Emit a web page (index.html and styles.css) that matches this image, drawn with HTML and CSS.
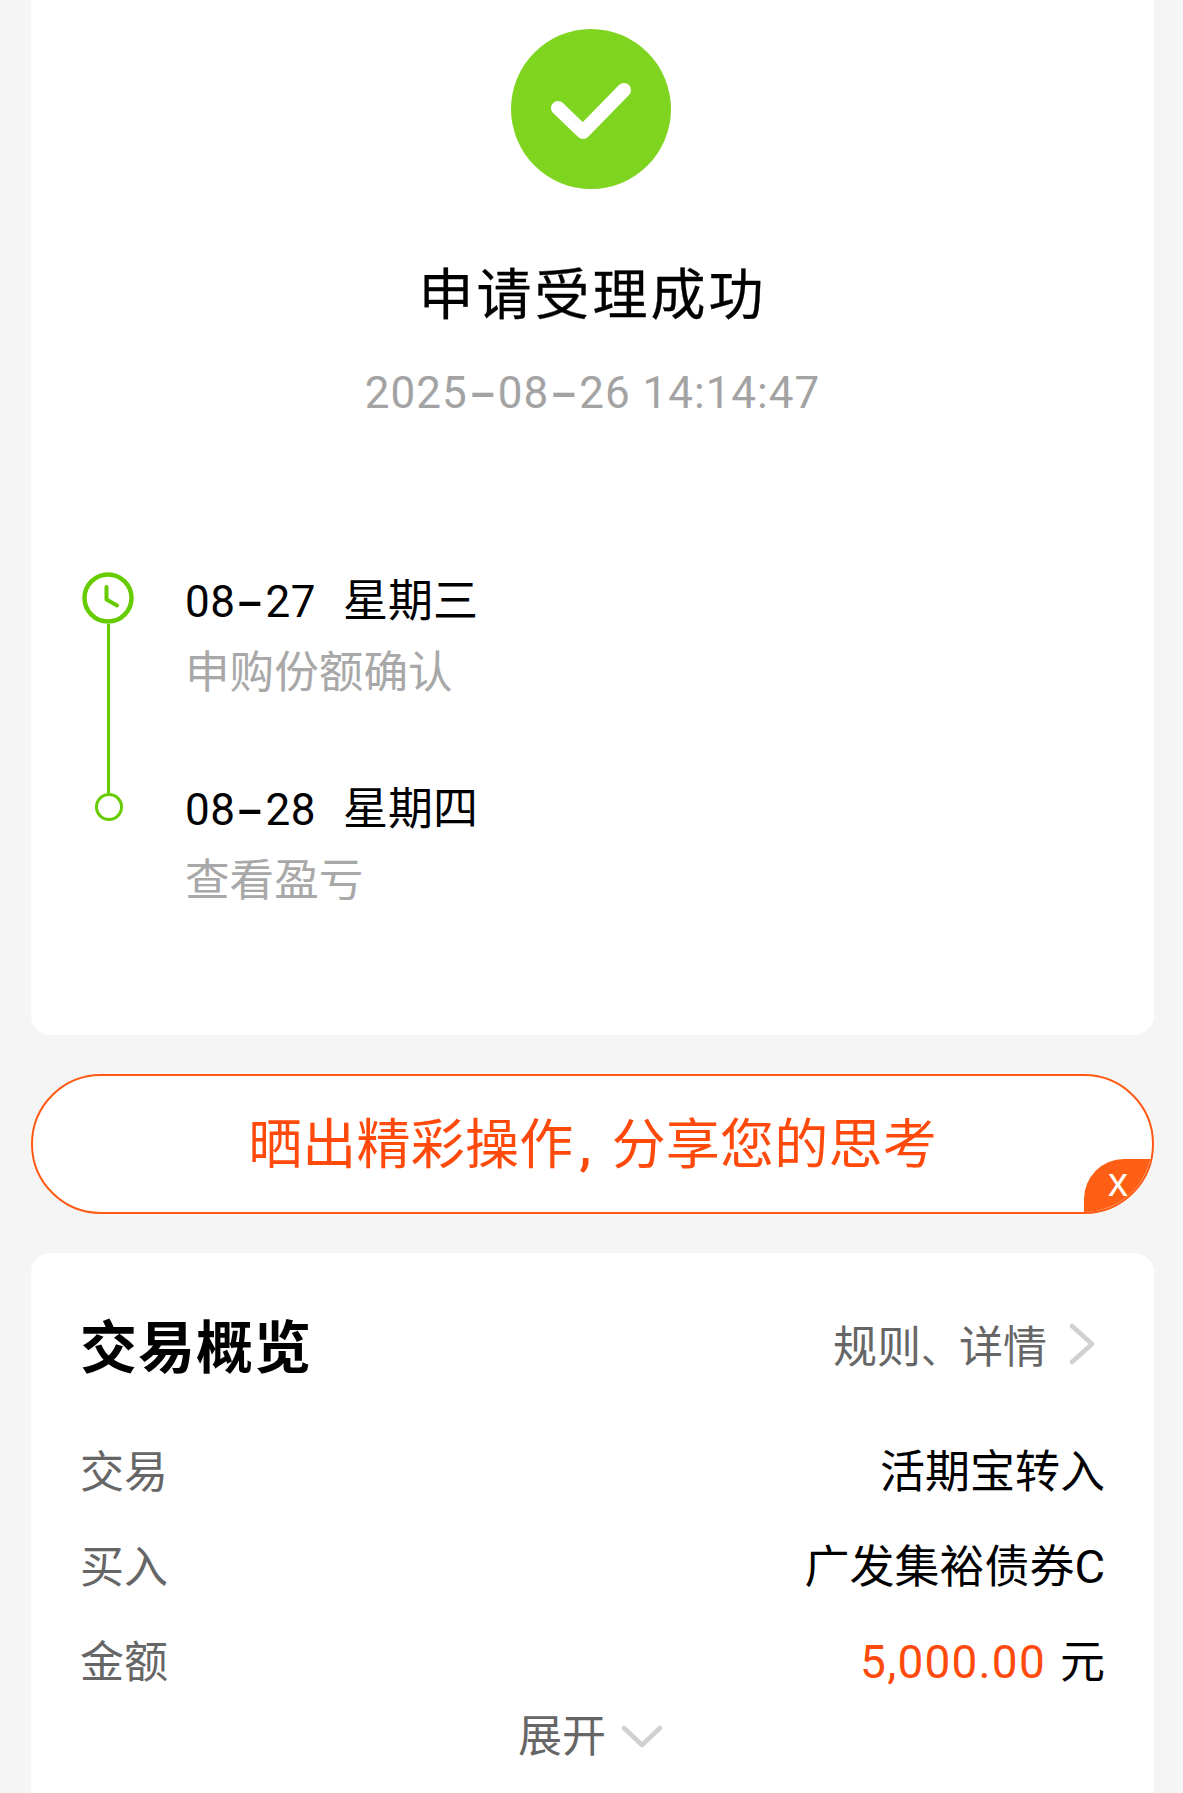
FILE: index.html
```html
<!DOCTYPE html>
<html lang="zh-CN">
<head>
<meta charset="utf-8">
<title>申请受理成功</title>
<link rel="stylesheet" href="styles.css">
</head>
<body>
<div class="page">
  <section class="card status">
    <svg class="check" viewBox="0 0 160 160" aria-hidden="true">
      <circle cx="80" cy="80" r="80" fill="#7fd420"/>
      <path d="M47 79 L72 103 L113 61" fill="none" stroke="#fff" stroke-width="14" stroke-linecap="round" stroke-linejoin="round"/>
    </svg>
    <h1 class="status-title">申请受理成功</h1>
    <div class="status-time">2025<span class="dash">-</span>08<span class="dash">-</span>26 14:14:47</div>
    <div class="timeline">
      <div class="rail">
        <svg class="clock" viewBox="0 0 52 52" aria-hidden="true">
          <circle cx="26" cy="26" r="23.5" fill="#fff" stroke="#66cc00" stroke-width="4.5"/>
          <path d="M24.5 15 V27.500 L35 33.500" fill="none" stroke="#66cc00" stroke-width="4" stroke-linecap="round" stroke-linejoin="round"/>
        </svg>
        <div class="rail-line"></div>
        <div class="rail-dot"></div>
      </div>
      <div class="steps">
        <div class="step">
          <div class="step-date"><span class="step-day">08<span class="dash">-</span>27</span><span>星期三</span></div>
          <div class="step-note">申购份额确认</div>
        </div>
        <div class="step">
          <div class="step-date"><span class="step-day">08<span class="dash">-</span>28</span><span>星期四</span></div>
          <div class="step-note">查看盈亏</div>
        </div>
      </div>
    </div>
  </section>

  <div class="banner">
    <span class="banner-text">晒出精彩操作<span class="comma">,</span>分享您的思考</span>
    <span class="banner-close">x</span>
  </div>

  <section class="card overview">
    <div class="overview-head">
      <h2 class="overview-title">交易概览</h2>
      <div class="overview-link">
        <span>规则<span class="pause">、</span>详情</span>
        <svg class="chev-right" viewBox="0 0 30 44" aria-hidden="true">
          <path d="M5 4 L25 22 L5 40" fill="none" stroke="#d0d0d0" stroke-width="4.500" stroke-linecap="round" stroke-linejoin="round"/>
        </svg>
      </div>
    </div>
    <div class="row"><span class="row-label">交易</span><span class="row-value">活期宝转入</span></div>
    <div class="row"><span class="row-label">买入</span><span class="row-value">广发集裕债券<span class="latin">C</span></span></div>
    <div class="row"><span class="row-label">金额</span><span class="row-value"><span class="amount">5,000.00</span>元</span></div>
    <div class="expand">
      <span>展开</span>
      <svg class="chev-down" viewBox="0 0 44 26" aria-hidden="true">
        <path d="M4 4 L22 21 L40 4" fill="none" stroke="#d0d0d0" stroke-width="4.500" stroke-linecap="round" stroke-linejoin="round"/>
      </svg>
    </div>
  </section>
</div>
</body>
</html>
```
FILE: styles.css
```css
* { box-sizing: border-box; }
html, body { margin: 0; padding: 0; }
body {
  background: #f5f5f5;
  font-family: Roboto, "Noto Sans CJK SC", "Noto Sans", sans-serif;
  color: #000;
}
.page {
  height: 1793px;
  overflow: hidden;
  padding: 0 29px 0 31px;
}
.card {
  background: #fff;
  border-radius: 20px;
}
.status {
  height: 1035px;
  border-radius: 0 0 20px 20px;
  padding-top: 29px;
  display: flex;
  flex-direction: column;
  align-items: center;
}
.check { width: 160px; height: 160px; flex: none; margin-right: 3px; }
.status-title {
  margin: 66px 0 0;
  font-size: 55px;
  line-height: 80px;
  font-weight: 400;
  letter-spacing: 3px;
  -webkit-text-stroke: 0.3px #000;
}
.status-time {
  margin-top: 28px;
  font-size: 44px;
  line-height: 60px;
  color: #a3a3a3;
  letter-spacing: 1px;
}
.dash {
  display: inline-block;
  width: 30px;
  text-align: center;
  transform: scale(2, 1.3);
  letter-spacing: 0;
}
.timeline {
  margin-top: 149px;
  align-self: stretch;
  display: flex;
  padding-left: 50px;
}
.rail {
  width: 54px;
  display: flex;
  flex-direction: column;
  align-items: center;
  flex: none;
}
.clock { width: 52px; height: 52px; flex: none; }
.rail-line { width: 3px; height: 169px; background: #66cc00; }
.rail-dot {
  width: 28px;
  height: 28px;
  margin-left: 2px;
  border: 3.500px solid #66cc00;
  border-radius: 50%;
  background: #fff;
}
.steps { margin-left: 50px; }
.step { height: 208px; }
.step-date {
  display: flex;
  gap: 27px;
  font-size: 45px;
  line-height: 60px;
}
.step-day { font-size: 44px; letter-spacing: 0.5px; }
.step-note {
  margin-top: 11px;
  font-size: 44.6px;
  line-height: 60px;
  color: #a8a8a8;
}
.banner {
  position: relative;
  margin-top: 39px;
  height: 140px;
  border: 2px solid #ff5a14;
  border-radius: 70px;
  background: #fff;
  display: flex;
  align-items: center;
  justify-content: center;
  overflow: hidden;
}
.banner-text {
  font-size: 54px;
  line-height: 70px;
  color: #ff4a0c;
  padding-top: 3px;
  letter-spacing: 0.2px;
}
.comma { margin-right: 20px; margin-left: 6px; font-weight: 500; }
.banner-close {
  position: absolute;
  right: 0;
  bottom: 0;
  width: 68px;
  height: 53px;
  background: #ff5f14;
  border-top-left-radius: 40px;
  color: #fff;
  font-size: 40px;
  line-height: 42px;
  text-align: center;
  font-family: "Liberation Sans", sans-serif;
  padding-top: 2px;
}
.overview {
  margin-top: 39px;
  height: 600px;
  padding: 46px 49px 0 49px;
}
.overview-head {
  display: flex;
  justify-content: space-between;
  align-items: center;
  height: 90px;
  margin-bottom: 32px;
}
.overview-title {
  margin: 9px 0 0;
  font-size: 57px;
  line-height: 90px;
  font-weight: 700;
  letter-spacing: 1px;
}
.overview-link {
  display: flex;
  align-items: center;
  gap: 20px;
  font-size: 44px;
  color: #666;
}
.pause { font-size: 38px; }
.chev-right { width: 30px; height: 44px; margin-right: 8px; }
.row {
  display: flex;
  justify-content: space-between;
  align-items: center;
  height: 95px;
  font-size: 45px;
}
.row-label { color: #666; font-size: 44px; }
.latin { font-size: 47px; }
.amount { color: #ff4a0c; margin-right: 14px; font-size: 46px; letter-spacing: 1.2px; }
.expand {
  display: flex;
  justify-content: center;
  align-items: center;
  gap: 14px;
  margin: 1px 3px 0 0;
  font-size: 44px;
  line-height: 60px;
  color: #666;
}
.chev-down { width: 44px; height: 26px; }
```
